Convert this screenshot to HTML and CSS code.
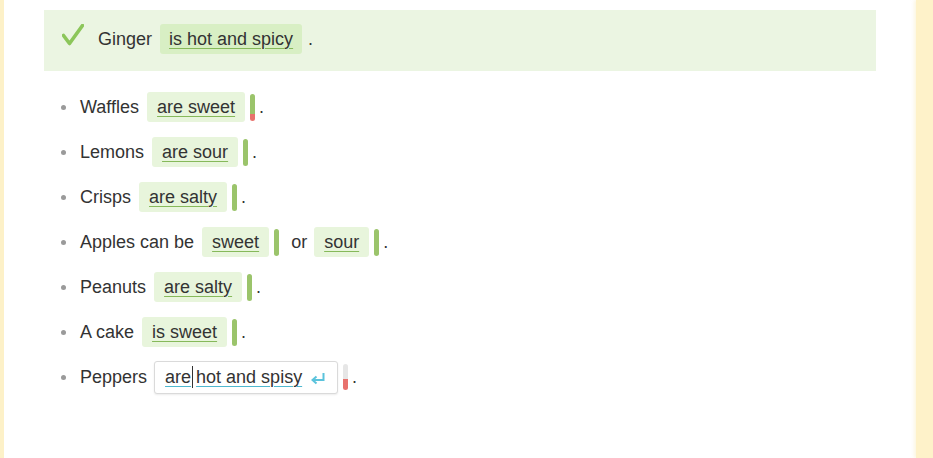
FILE: index.html
```html
<!DOCTYPE html>
<html>
<head>
<meta charset="utf-8">
<link rel="stylesheet" href="styles.css">
</head>
<body>
<div class="page">
  <div class="stripe-left"></div>
  <main class="main">
    <div class="feedback">
      <svg class="check" width="22" height="22" viewBox="0 0 22 22"><path d="M1.5 11.5 L7.5 19.5 L20.5 1.5" fill="none" stroke="#8cc65a" stroke-width="3.6" stroke-linecap="round" stroke-linejoin="round"/></svg>
      <span class="word">Ginger</span>
      <span class="pill pill-strong"><span class="ul">is hot and spicy</span></span>
      <span class="dot dot-fb">.</span>
    </div>
    <ul class="list">
      <li class="item"><span class="bullet"></span><span class="word">Waffles</span><span class="pill"><span class="ul">are sweet</span></span><span class="bar bar-red"></span><span class="dot">.</span></li>
      <li class="item"><span class="bullet"></span><span class="word">Lemons</span><span class="pill"><span class="ul">are sour</span></span><span class="bar"></span><span class="dot">.</span></li>
      <li class="item"><span class="bullet"></span><span class="word">Crisps</span><span class="pill"><span class="ul">are salty</span></span><span class="bar"></span><span class="dot">.</span></li>
      <li class="item"><span class="bullet"></span><span class="word">Apples can be</span><span class="pill"><span class="ul">sweet</span></span><span class="bar"></span><span class="word word-or">or</span><span class="pill"><span class="ul">sour</span></span><span class="bar"></span><span class="dot">.</span></li>
      <li class="item"><span class="bullet"></span><span class="word">Peanuts</span><span class="pill"><span class="ul">are salty</span></span><span class="bar"></span><span class="dot">.</span></li>
      <li class="item"><span class="bullet"></span><span class="word">A cake</span><span class="pill"><span class="ul">is sweet</span></span><span class="bar"></span><span class="dot">.</span></li>
      <li class="item"><span class="bullet"></span><span class="word word-pep">Peppers</span><span class="input"><span class="input-text">are<span class="caret"></span>hot and spisy</span><svg class="enter" width="14" height="13" viewBox="0 0 14 13"><path d="M12.5 1 V8 H2.5" fill="none" stroke="#5bc3dc" stroke-width="2"/><path d="M5.5 4.5 L1.5 8 L5.5 11.5" fill="none" stroke="#5bc3dc" stroke-width="2"/></svg></span><span class="bar bar-gray"></span><span class="dot">.</span></li>
    </ul>
  </main>
  <div class="stripe-right"></div>
</div>
</body>
</html>
```
FILE: styles.css
```css
html, body {
  margin: 0;
  padding: 0;
  background: #ffffff;
}
body {
  font-family: "Liberation Sans", Arial, sans-serif;
  font-size: 18px;
  color: #333333;
}
.page {
  display: flex;
  width: 933px;
  height: 458px;
}
.stripe-left {
  width: 4px;
  background: #fdf1c8;
}
.stripe-right {
  width: 17px;
  background: #fef2c9;
  box-shadow: -2px 0 3px rgba(250, 240, 200, 0.5);
}
.main {
  flex: 1;
  padding: 10px 40px 0 40px;
  background: #ffffff;
}
.feedback {
  display: flex;
  align-items: center;
  height: 61px;
  box-sizing: border-box;
  padding: 0 0 3px 18px;
  background: #ebf5e2;
}
.check {
  margin-right: 14px;
  margin-top: -8px;
}
.word {
  white-space: nowrap;
  margin-right: 8px;
}
.pill {
  display: inline-flex;
  align-items: center;
  height: 30px;
  padding: 0 10px;
  background: #e8f5dc;
  border-radius: 3px;
  white-space: nowrap;
}
.pill-strong {
  background: #d8efc4;
  padding: 0 9px;
}
.ul {
  text-decoration: underline;
  text-decoration-color: #86b95a;
  text-decoration-thickness: 1px;
  text-underline-offset: 3px;
}
.dot-fb {
  margin-left: 6px;
}
.list {
  list-style: none;
  margin: 21px 0 0 0;
  padding: 0 0 0 17px;
}
.item {
  display: flex;
  align-items: center;
  height: 30px;
  margin-bottom: 15px;
}
.bullet {
  width: 5px;
  height: 5px;
  border-radius: 50%;
  background: #9a9a9a;
  margin-right: 14px;
}
.bar {
  width: 5px;
  height: 27px;
  border-radius: 3px;
  background: #9bc46b;
  margin-left: 5px;
  margin-right: 4px;
}
.bar-red {
  background: linear-gradient(to bottom, #9bc46b 0, #9bc46b 20px, #e8726d 20px);
}
.bar-gray {
  height: 26px;
  background: linear-gradient(to bottom, #e6e6e6 0, #e6e6e6 15px, #e8726d 15px);
}
.word-or {
  margin-left: 8px;
  margin-right: 7px;
}
.word-pep {
  margin-right: 7px;
}
.input {
  display: inline-flex;
  align-items: center;
  box-sizing: border-box;
  width: 184px;
  height: 33px;
  padding: 0 12px 0 10px;
  border: 1px solid #dadada;
  border-radius: 3px;
  background: #ffffff;
  box-shadow: 0 1px 2px rgba(0, 0, 0, 0.08);
  white-space: nowrap;
}
.input-text {
  text-decoration: underline;
  text-decoration-color: #4fb8cf;
  text-decoration-thickness: 1px;
  text-underline-offset: 3px;
}
.caret {
  display: inline-block;
  width: 1px;
  height: 22px;
  background: #333333;
  vertical-align: -5px;
  margin-left: 1px;
  margin-right: 3px;
}
.enter {
  margin-left: auto;
  margin-top: 2px;
}
```
